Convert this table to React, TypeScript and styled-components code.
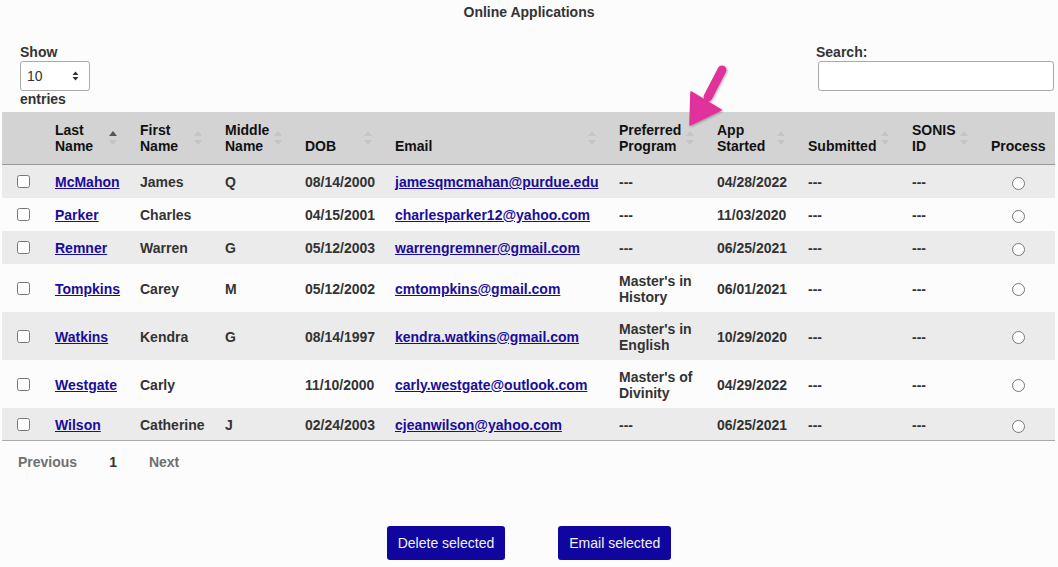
import styled, { createGlobalStyle } from "styled-components";

const GlobalStyle = createGlobalStyle`
  body {
    margin: 0;
    background: #fcfcfc;
    font-family: "Liberation Sans", Arial, sans-serif;
    color: #333;
  }
`;

const Page = styled.div`
  position: relative;
  width: 1058px;
  height: 567px;
  padding-top: 4px;
  box-sizing: border-box;
`;

const Title = styled.h1`
  margin: 0;
  font-size: 14px;
  line-height: 16px;
  font-weight: bold;
  text-align: center;
`;

const Controls = styled.div`
  display: flex;
  justify-content: space-between;
  padding: 0 4px 0 20px;
  margin-top: 24px;
`;

const Field = styled.div`
  display: flex;
  flex-direction: column;
  font-size: 14px;
  line-height: 16px;
  font-weight: bold;
`;

const SelectBox = styled.div`
  display: flex;
  align-items: center;
  justify-content: space-between;
  width: 70px;
  height: 30px;
  margin-top: 1px;
  padding: 0 10px 0 6px;
  box-sizing: border-box;
  border: 1px solid #aaa;
  border-radius: 3px;
  background: #fff;
  font-weight: normal;
  color: #333;
`;

const SearchInput = styled.input`
  width: 236px;
  height: 30px;
  margin: 1px 0 0 2px;
  box-sizing: border-box;
  border: 1px solid #aaa;
  border-radius: 3px;
  background: #fff;
`;

const Table = styled.table`
  margin: 5px 0 0 2px;
  width: 1053px;
  table-layout: fixed;
  border-collapse: collapse;
  font-size: 14px;
  line-height: 16px;
  font-weight: bold;
  border-bottom: 1px solid #aaa;
`;

const Th = styled.th<{ $center?: boolean }>`
  position: relative;
  padding: ${(p) => (p.$center ? "10px" : "10px 18px 10px 10px")};
  background: #d3d3d3;
  border-bottom: 1px solid #999;
  color: #111;
  text-align: ${(p) => (p.$center ? "center" : "left")};
  vertical-align: bottom;
`;

const SortIcon = styled.span`
  position: absolute;
  right: 13px;
  top: 50%;
  transform: translateY(-50%);
  display: flex;
  flex-direction: column;
  gap: 4px;
`;

const Tri = styled.span<{ $down?: boolean; $active?: boolean }>`
  width: 0;
  height: 0;
  border-left: 4px solid transparent;
  border-right: 4px solid transparent;
  ${(p) => (p.$down ? "border-top" : "border-bottom")}: 5px solid
    ${(p) => (p.$active ? "#555" : "#c4c4c4")};
`;

const Row = styled.tr<{ $odd: boolean }>`
  height: 33px;
  background: ${(p) => (p.$odd ? "#ebebeb" : "#fcfcfc")};
`;

const Td = styled.td<{ $center?: boolean }>`
  padding: 9px 10px 7px;
  vertical-align: middle;
  text-align: ${(p) => (p.$center ? "center" : "left")};
  color: #333;
`;

const CheckTd = styled.td`
  padding: 1px 0 0 15px;
  vertical-align: middle;
`;

const Check = styled.input`
  display: block;
  margin: 0;
  width: 13px;
  height: 13px;
`;

const Radio = styled.input`
  margin: 0;
  width: 13px;
  height: 13px;
  vertical-align: middle;
`;

const Link = styled.a`
  color: #1a0c9c;
  text-decoration: underline;
`;

const Pager = styled.div`
  display: flex;
  padding-left: 2px;
  margin-top: 13px;
  font-size: 14px;
  line-height: 16px;
  font-weight: bold;
`;

const PageItem = styled.span<{ $current?: boolean }>`
  padding: 0 16px;
  color: ${(p) => (p.$current ? "#333" : "#707070")};
`;

const Actions = styled.div`
  display: flex;
  justify-content: center;
  gap: 53px;
  margin-top: 56px;
`;

const ActionButton = styled.button`
  height: 34px;
  padding: 0 11px;
  border: none;
  border-radius: 3px;
  background: #10069f;
  color: #f2f2f2;
  font-family: "Liberation Sans", Arial, sans-serif;
  font-size: 14px;
`;

const Annotation = styled.svg`
  position: absolute;
  left: 680px;
  top: 60px;
  overflow: visible;
`;

const columns = [
  { label: "", width: 43 },
  { label: "Last Name", width: 85, sort: "asc" },
  { label: "First Name", width: 85, sort: "none" },
  { label: "Middle Name", width: 80, sort: "none" },
  { label: "DOB", width: 90, sort: "none" },
  { label: "Email", width: 224, sort: "none" },
  { label: "Preferred Program", width: 98, sort: "none" },
  { label: "App Started", width: 91, sort: "none" },
  { label: "Submitted", width: 104, sort: "none" },
  { label: "SONIS ID", width: 79, sort: "none" },
  { label: "Process", width: 74 },
];

const rows = [
  ["McMahon", "James", "Q", "08/14/2000", "jamesqmcmahan@purdue.edu", "---", "04/28/2022"],
  ["Parker", "Charles", "", "04/15/2001", "charlesparker12@yahoo.com", "---", "11/03/2020"],
  ["Remner", "Warren", "G", "05/12/2003", "warrengremner@gmail.com", "---", "06/25/2021"],
  ["Tompkins", "Carey", "M", "05/12/2002", "cmtompkins@gmail.com", "Master's in History", "06/01/2021"],
  ["Watkins", "Kendra", "G", "08/14/1997", "kendra.watkins@gmail.com", "Master's in English", "10/29/2020"],
  ["Westgate", "Carly", "", "11/10/2000", "carly.westgate@outlook.com", "Master's of Divinity", "04/29/2022"],
  ["Wilson", "Catherine", "J", "02/24/2003", "cjeanwilson@yahoo.com", "---", "06/25/2021"],
];

function SelectArrows() {
  return (
    <svg width="7" height="10" viewBox="0 0 7 10">
      <path d="M0.5 4 L3.5 0.5 L6.5 4 Z M0.5 6 L3.5 9.5 L6.5 6 Z" fill="#333" />
    </svg>
  );
}

export default function App() {
  return (
    <Page>
      <GlobalStyle />
      <Title>Online Applications</Title>
      <Controls>
        <Field>
          Show
          <SelectBox>
            <span>10</span>
            <SelectArrows />
          </SelectBox>
          entries
        </Field>
        <Field>
          Search:
          <SearchInput type="text" />
        </Field>
      </Controls>

      <Table>
        <colgroup>
          {columns.map((c, i) => (
            <col key={i} style={{ width: c.width }} />
          ))}
        </colgroup>
        <thead>
          <tr>
            {columns.map((c, i) => (
              <Th key={i} $center={c.label === "Process"}>
                {c.label}
                {c.sort && (
                  <SortIcon>
                    <Tri $active={c.sort === "asc"} />
                    <Tri $down />
                  </SortIcon>
                )}
              </Th>
            ))}
          </tr>
        </thead>
        <tbody>
          {rows.map((r, i) => (
            <Row key={r[0]} $odd={i % 2 === 0}>
              <CheckTd>
                <Check type="checkbox" />
              </CheckTd>
              <Td>
                <Link href="#">{r[0]}</Link>
              </Td>
              <Td>{r[1]}</Td>
              <Td>{r[2]}</Td>
              <Td>{r[3]}</Td>
              <Td>
                <Link href="#">{r[4]}</Link>
              </Td>
              <Td>{r[5]}</Td>
              <Td>{r[6]}</Td>
              <Td>---</Td>
              <Td>---</Td>
              <Td $center>
                <Radio type="radio" name={`process-${i}`} />
              </Td>
            </Row>
          ))}
        </tbody>
      </Table>

      <Pager>
        <PageItem>Previous</PageItem>
        <PageItem $current>1</PageItem>
        <PageItem>Next</PageItem>
      </Pager>

      <Actions>
        <ActionButton>Delete selected</ActionButton>
        <ActionButton>Email selected</ActionButton>
      </Actions>

      <Annotation width="50" height="70" viewBox="680 60 50 70">
        <defs>
          <filter id="shadow" x="-20%" y="-20%" width="140%" height="140%">
            <feDropShadow dx="1" dy="1" stdDeviation="1" floodColor="#000" floodOpacity="0.3" />
          </filter>
        </defs>
        <g filter="url(#shadow)" fill="#e0309a" stroke="#e0309a">
          <line x1="722" y1="70" x2="708" y2="97" strokeWidth="9" strokeLinecap="round" />
          <polygon points="690,125 691,92 721,110" strokeWidth="1.5" strokeLinejoin="round" />
        </g>
      </Annotation>
    </Page>
  );
}
